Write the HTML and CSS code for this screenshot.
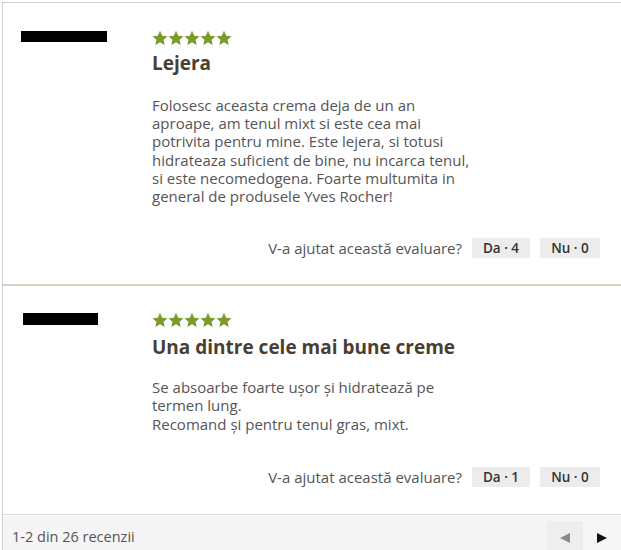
FILE: index.html
```html
<!DOCTYPE html>
<html lang="ro">
<head>
<meta charset="utf-8">
<link rel="stylesheet" href="styles.css">
</head>
<body>
<div class="reviews">
  <div class="review">
    <div class="author"><span class="redacted r1"></span></div>
    <div class="content">
      <div class="stars">
        <svg viewBox="0 0 80 16" width="80" height="16"><g fill="#7b9a2d"><path id="s" d="M8 0.8l2.2 4.9 5.3.5-4 3.6 1.2 5.2L8 12.3 3.3 15l1.2-5.2-4-3.6 5.3-.5z"/><use href="#s" x="16"/><use href="#s" x="32"/><use href="#s" x="48"/><use href="#s" x="64"/></g></svg>
      </div>
      <h3 class="title">Lejera</h3>
      <p class="text">Folosesc aceasta crema deja de un an aproape, am tenul mixt si este cea mai potrivita pentru mine. Este lejera, si totusi hidrateaza suficient de bine, nu incarca tenul, si este necomedogena. Foarte multumita in general de produsele Yves Rocher!</p>
      <div class="helpful">
        <span class="q">V-a ajutat această evaluare?</span>
        <span class="vote vote-da">Da · 4</span>
        <span class="vote">Nu · 0</span>
      </div>
    </div>
  </div>
  <div class="review second">
    <div class="author"><span class="redacted r2"></span></div>
    <div class="content">
      <div class="stars">
        <svg viewBox="0 0 80 16" width="80" height="16"><g fill="#7b9a2d"><path id="s2" d="M8 0.8l2.2 4.9 5.3.5-4 3.6 1.2 5.2L8 12.3 3.3 15l1.2-5.2-4-3.6 5.3-.5z"/><use href="#s2" x="16"/><use href="#s2" x="32"/><use href="#s2" x="48"/><use href="#s2" x="64"/></g></svg>
      </div>
      <h3 class="title">Una dintre cele mai bune creme</h3>
      <p class="text">Se absoarbe foarte ușor și hidratează pe termen lung.<br>Recomand și pentru tenul gras, mixt.</p>
      <div class="helpful">
        <span class="q">V-a ajutat această evaluare?</span>
        <span class="vote vote-da">Da · 1</span>
        <span class="vote">Nu · 0</span>
      </div>
    </div>
  </div>
  <div class="footer">
    <span class="count">1-2 din 26 recenzii</span>
    <div class="pager">
      <span class="page-btn prev"><span class="tri-left"></span></span>
      <span class="page-btn next"><span class="tri-right"></span></span>
    </div>
  </div>
</div>
</body>
</html>
```
FILE: styles.css
```css
html, body {
  margin: 0;
  padding: 0;
  background: #fff;
}
body {
  font-family: "Open Sans", "DejaVu Sans", sans-serif;
  color: #555;
}
.reviews {
  margin: 2px 0 0 2px;
  width: 620px;
  border-top: 1px solid #cfcfcf;
  border-left: 1px solid #cfcfcf;
}
.review {
  display: grid;
  grid-template-columns: 131px 1fr;
  padding: 27px 23px 26px 18px;
  border-bottom: 2px solid #d4d3c4;
}
.review.second {
  padding-top: 26px;
  padding-bottom: 27px;
  border-bottom: 1px solid #d9d9d9;
}
.author {
  padding-top: 1px;
}
.redacted {
  display: block;
  background: #000;
  height: 11px;
}
.r1 { width: 86px; }
.r2 { width: 75px; height: 12px; margin-left: 2px; }
.stars {
  height: 16px;
  line-height: 0;
}
.title {
  margin: 5px 0 0;
  font-size: 19px;
  font-weight: 700;
  color: #4a3e31;
  line-height: 24px;
}
.second .title {
  margin-top: 7px;
}
.text {
  margin: 21px 0 0;
  max-width: 322px;
  font-size: 15px;
  line-height: 18.2px;
  color: #555;
}
.second .text {
  margin-top: 19px;
}
.helpful {
  display: flex;
  justify-content: flex-end;
  align-items: center;
  gap: 10px;
  margin-top: 33px;
  font-size: 15px;
}
.second .helpful {
  margin-top: 34px;
}
.q {
  color: #555;
}
.vote {
  background: #ececec;
  color: #333;
  font-size: 13.5px;
  height: 20px;
  line-height: 20px;
  width: 60px;
  text-align: center;
  font-weight: 600;
}
.vote-da {
  width: 58px;
}
.footer {
  display: flex;
  justify-content: space-between;
  align-items: stretch;
  background: #f5f5f5;
  height: 40px;
  margin-top: 1px;
}
.count {
  font-size: 14.5px;
  color: #555;
  padding: 11px 0 0 9px;
}
.pager {
  display: flex;
  padding-top: 5px;
  margin-right: 2px;
}
.page-btn {
  display: flex;
  align-items: center;
  justify-content: center;
  width: 36px;
  height: 35px;
}
.prev { background: #eeeeee; }
.next { background: #f6f6f6; width: 38px; }
.tri-left {
  width: 0; height: 0;
  border-top: 5px solid transparent;
  border-bottom: 5px solid transparent;
  border-right: 10px solid #8a8a8a;
}
.tri-right {
  width: 0; height: 0;
  border-top: 5px solid transparent;
  border-bottom: 5px solid transparent;
  border-left: 10px solid #111;
}
```
